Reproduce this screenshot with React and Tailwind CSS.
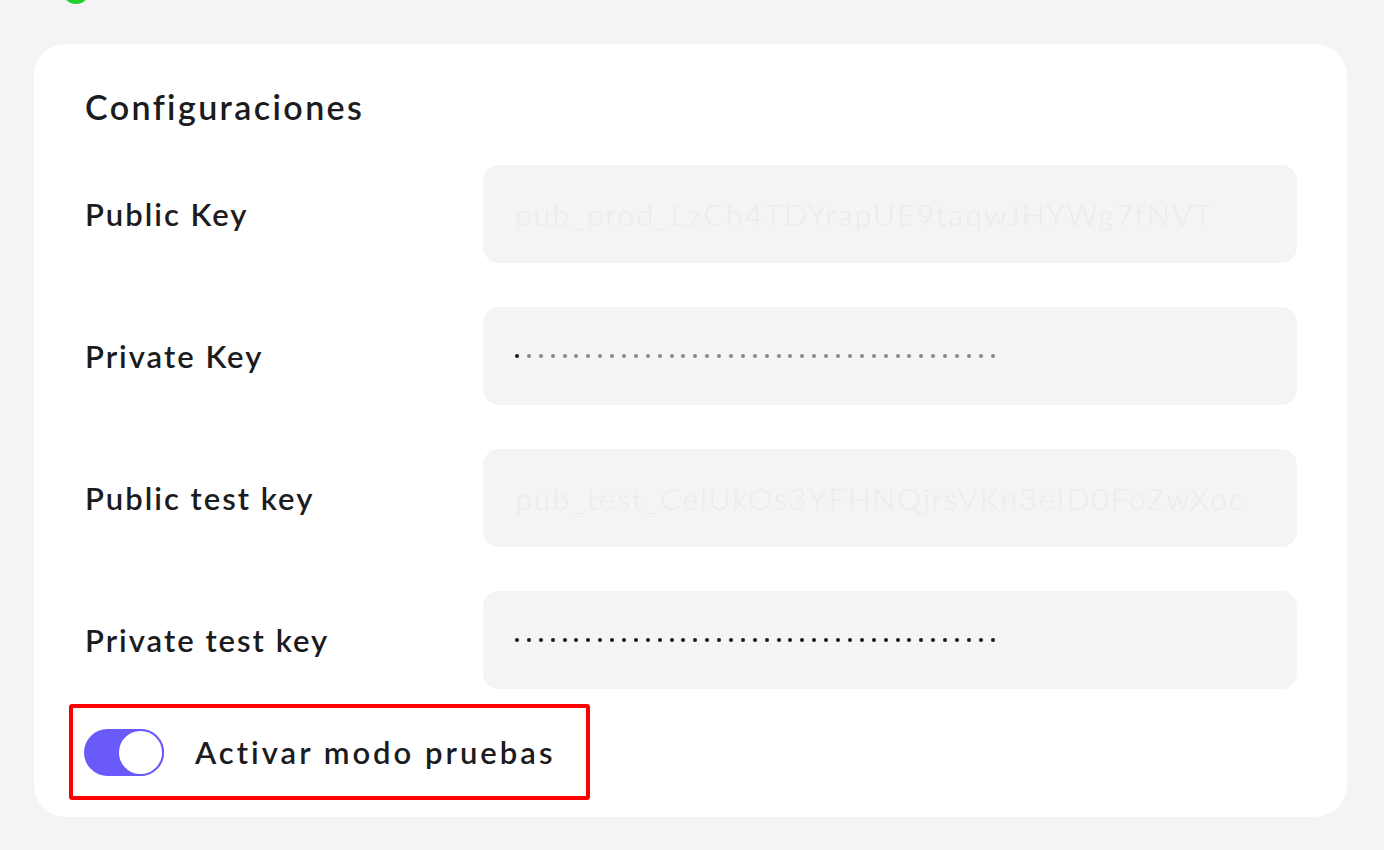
import React, { useState } from 'react';

const dots = Array.from({ length: 41 });

function DotField({ firstDark, allDark }) {
  return (
    <div className="flex items-center gap-[7.9px]">
      {dots.map((_, i) => (
        <span
          key={i}
          className={
            'block w-[4px] h-[4px] rounded-full ' +
            (allDark || (firstDark && i === 0) ? 'bg-[#1a1a1f]' : 'bg-[#8a8a8e]')
          }
        />
      ))}
    </div>
  );
}

function KeyRow({ label, children }) {
  return (
    <div className="flex items-center">
      <div className="w-[398px] shrink-0 text-[31px] font-semibold text-[#1b1b20] tracking-[2px]">{label}</div>
      <div className="flex-1 h-[98px] rounded-[16px] bg-[#f4f4f4] flex items-center pl-[32px] pr-[29px] overflow-hidden">
        {children}
      </div>
    </div>
  );
}

function FadedText({ text }) {
  return (
    <div className="w-full overflow-hidden whitespace-nowrap text-[30px] font-light text-[#ebebeb] tracking-[2.2px]">
      {text}
    </div>
  );
}

export default function App() {
  const [testMode, setTestMode] = useState(true);

  return (
    <div className="min-h-screen bg-[#f4f4f4] px-[34px] pr-[37px]" style={{ fontFamily: 'Lato, "Noto Sans", sans-serif' }}>
      {/* bit of a status dot from the section above */}
      <div className="h-[44px] overflow-hidden">
        <div className="ml-[28px] -mt-[24px] w-[28px] h-[28px] rounded-full bg-[#22cf2c]" />
      </div>

      <div className="bg-white rounded-[32px] pl-[51px] pr-[50px] pt-[41px] pb-[17px]">
        <h2 className="text-[34px] leading-[44px] font-semibold text-[#1b1b20] tracking-[2.4px]">Configuraciones</h2>

        <div className="mt-[36px] flex flex-col gap-[44px]">
          <KeyRow label="Public Key">
            <FadedText text="pub_prod_LzCh4TDYrapUE9taqwJHYWg7fNVT" />
          </KeyRow>
          <KeyRow label="Private Key">
            <DotField firstDark />
          </KeyRow>
          <KeyRow label="Public test key">
            <FadedText text="pub_test_CelUkOs3YFHNQjrsVKn3eID0FoZwXoc" />
          </KeyRow>
          <KeyRow label="Private test key">
            <DotField allDark />
          </KeyRow>
        </div>

        <div className="mt-[15px] -ml-[16px] w-[521px] h-[96px] border-4 border-[#ff0000] rounded-[3px] flex items-center pl-[11px]">
          <button
            type="button"
            onClick={() => setTestMode(!testMode)}
            className="relative w-[80px] h-[47px] rounded-full bg-[#6a5af9] shrink-0"
          >
            <span className="absolute right-0 top-0 w-[47px] h-[47px] rounded-full bg-white border-[2px] border-[#6a5af9]" />
          </button>
          <span className="ml-[31px] text-[31px] font-semibold text-[#1b1b20] tracking-[3px]">Activar modo pruebas</span>
        </div>
      </div>
    </div>
  );
}
